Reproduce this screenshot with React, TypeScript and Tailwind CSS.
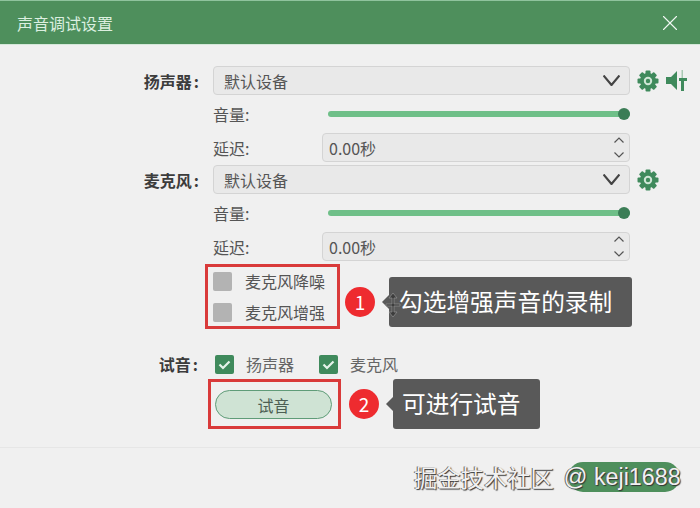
import { X } from "lucide-react";

const cjk = "font-['Noto_Sans_CJK_SC','Liberation_Sans',sans-serif]";

function Gear() {
  return (
    <svg width="22" height="22" viewBox="0 0 22 22" className="shrink-0">
      <g fill="#3f8a5c">
        {[0, 45, 90, 135, 180, 225, 270, 315].map((a) => (
          <rect key={a} x="8.5" y="0.5" width="5" height="5" rx="1" transform={`rotate(${a} 11 11)`} />
        ))}
        <circle cx="11" cy="11" r="8" />
      </g>
      <circle cx="11" cy="11" r="3.2" fill="none" stroke="#cfe6d6" strokeWidth="2" />
    </svg>
  );
}

function SpeakerMixer() {
  return (
    <svg width="22" height="22" viewBox="0 0 22 22" className="shrink-0">
      <path d="M0 7h5l6-6v19l-6-6H0z" fill="#3f8a5c" />
      <rect x="15.5" y="0" width="1.5" height="8" fill="#a9c9b4" />
      <rect x="15" y="8" width="3" height="13" fill="#3f8a5c" />
      <rect x="13" y="8" width="8" height="3" fill="#3f8a5c" />
    </svg>
  );
}

function Chevron({ up, w, h, sw, color }: { up?: boolean; w: number; h: number; sw: number; color: string }) {
  const d = up ? `M0.5 ${h - 0.5}L${w / 2} 1L${w - 0.5} ${h - 0.5}` : `M0.5 0.5L${w / 2} ${h - 1}L${w - 0.5} 0.5`;
  return (
    <svg width={w} height={h} viewBox={`0 0 ${w} ${h}`} className="shrink-0">
      <path d={d} fill="none" stroke={color} strokeWidth={sw} />
    </svg>
  );
}

function SelectRow({ label, extra }: { label: string; extra: React.ReactNode }) {
  return (
    <div className="flex items-center h-[29px]">
      <div className="w-[200px] pr-[1px] text-right text-[16px] font-bold text-[#3c3c3c]">
        {label}
        <span className="ml-[2px]">:</span>
      </div>
      <div className="ml-[13px] w-[417px] h-[29px] flex items-center justify-between rounded-[4px] border border-[#d4d4d4] bg-[#e9e9e9] pl-[10px] pr-[9px] text-[16px] text-[#555555]">
        <span>默认设备</span>
        <Chevron w={17} h={11} sw={2.2} color="#444444" />
      </div>
      <div className="ml-[7px] flex items-center gap-[7px]">{extra}</div>
    </div>
  );
}

function VolumeRow() {
  return (
    <div className="flex items-center h-[38px] pl-[213px]">
      <div className="w-[115px] text-[16px] text-[#555555]">音量:</div>
      <div className="relative w-[302px] h-[6px] rounded-full bg-[#6fbf88]">
        <div className="absolute right-0 top-[-3px] w-[12px] h-[12px] rounded-full bg-[#3b7d56]" />
      </div>
    </div>
  );
}

function DelayRow() {
  return (
    <div className="flex items-center h-[29px] pl-[213px]">
      <div className="w-[109px] text-[16px] text-[#555555]">延迟:</div>
      <div className="w-[308px] h-[29px] flex items-center justify-between rounded-[4px] border border-[#d4d4d4] bg-[#e9e9e9] pl-[6px] pr-[5px] text-[16px] text-[#555555]">
        <span>0.00秒</span>
        <div className="flex flex-col items-center gap-[9px]">
          <Chevron up w={10} h={6} sw={1.2} color="#555555" />
          <Chevron w={10} h={6} sw={1.2} color="#555555" />
        </div>
      </div>
    </div>
  );
}

function Checked({ label, className }: { label: string; className: string }) {
  return (
    <div className={`flex items-center ${className}`}>
      <div className="w-[19px] h-[19px] rounded-[2px] bg-[#3f8a5c] flex items-center justify-center">
        <svg width="15" height="15" viewBox="0 0 15 15">
          <path d="M2.5 7.5l3.5 3.5 6.5-6.5" fill="none" stroke="#e6f3ea" strokeWidth="2.2" />
        </svg>
      </div>
      <span className="ml-[12px] text-[16px] text-[#666666]">{label}</span>
    </div>
  );
}

function Badge({ n, className }: { n: string; className: string }) {
  return (
    <div className={`absolute w-[30px] h-[30px] rounded-full bg-[#ee2b2f] text-white text-[19px] flex items-center justify-center ${className}`}>
      {n}
    </div>
  );
}

export default function App() {
  return (
    <div className={`relative w-[700px] h-[508px] overflow-hidden bg-[#f0f0f0] ${cjk}`}>
      {/* Title bar */}
      <div className="h-[45px] flex items-center justify-between border-t border-[#8fc39d] border-b-[#d5e8da] border-b bg-[#4e8f5c] pl-[17px] pr-[17px] text-[16px] text-[#dcefe0]">
        <span>声音调试设置</span>
        <X size={26} strokeWidth={1} color="#f2f8f3" />
      </div>

      <div className="pt-[21px]">
        <SelectRow
          label="扬声器"
          extra={
            <>
              <Gear />
              <SpeakerMixer />
            </>
          }
        />
        <VolumeRow />
        <DelayRow />
        <div className="h-[3px]" />
        <SelectRow label="麦克风" extra={<Gear />} />
        <VolumeRow />
        <DelayRow />

        {/* Recording options */}
        <div className="pl-[213px] pt-[10px] flex flex-col gap-[11px]">
          <div className="flex items-center h-[20px]">
            <div className="w-[19px] h-[19px] rounded-[2px] bg-[#b3b3b3]" />
            <span className="ml-[13px] text-[16px] text-[#555555]">麦克风降噪</span>
          </div>
          <div className="flex items-center h-[20px]">
            <div className="w-[19px] h-[19px] rounded-[2px] bg-[#b3b3b3]" />
            <span className="ml-[13px] text-[16px] text-[#555555]">麦克风增强</span>
          </div>
        </div>

        {/* Test row */}
        <div className="flex items-center h-[20px] mt-[32px]">
          <div className="w-[198px] text-right text-[16px] font-bold text-[#3c3c3c]">
            试音
            <span className="ml-[2px]">:</span>
          </div>
          <Checked label="扬声器" className="ml-[17px]" />
          <Checked label="麦克风" className="ml-[25px]" />
        </div>
        <div className="pl-[215px] mt-[16px]">
          <div className="w-[117px] h-[29px] flex items-center justify-center rounded-full border border-[#5f9c78] bg-[#cfe3d4] text-[16px] text-[#4d5f53]">
            试音
          </div>
        </div>
      </div>

      {/* Footer */}
      <div className="absolute left-0 right-0 top-[447px] border-t border-[#e6e6e6]" />
      <div className="absolute left-[568px] top-[462px] w-[112px] h-[30px] rounded-full bg-[#4e8f5c]" />

      {/* Annotations */}
      <div className="absolute left-[205px] top-[264px] w-[135px] h-[65px] border-[3px] border-[#d93a3a]" />
      <div className="absolute left-[208px] top-[379px] w-[133px] h-[50px] border-[3px] border-[#d93a3a]" />
      <Badge n="1" className="left-[345px] top-[287px]" />
      <Badge n="2" className="left-[349px] top-[389px]" />

      <div className="absolute left-[389px] top-[277px] w-[243px] h-[50px] rounded-[3px] bg-[#595959] flex items-center pl-[10px] text-[23.7px] text-white">
        <div className="absolute left-[-7px] top-[18px] w-0 h-0 border-y-[7px] border-y-transparent border-r-[7px] border-r-[#595959]" />
        勾选增强声音的录制
      </div>
      <div className="absolute left-[393px] top-[379px] w-[147px] h-[50px] rounded-[3px] bg-[#595959] flex items-center pl-[9px] text-[23.7px] text-white">
        <div className="absolute left-[-7px] top-[18px] w-0 h-0 border-y-[7px] border-y-transparent border-r-[7px] border-r-[#595959]" />
        可进行试音
      </div>

      {/* Cursor */}
      <svg className="absolute left-[384px] top-[291px]" width="18" height="28" viewBox="0 0 18 28">
        <path d="M9 2l4 5h-3v6h6v2h-6v6h3l-4 5-4-5h3v-6H2v-2h6V7H5z" fill="#3d3d3d" stroke="#8a8a8a" strokeWidth="0.8" />
      </svg>

      {/* Watermark */}
      <div className="absolute left-[414px] top-[462px] h-[30px] flex items-center whitespace-nowrap text-[23.3px] text-[#f1f1f1] [text-shadow:1px_1px_1px_#333,-1px_0_0_#666]">
        <span>掘金技术社区</span>
        <span className="ml-[10px] font-['Liberation_Sans',sans-serif]">@ keji1688</span>
      </div>
    </div>
  );
}
